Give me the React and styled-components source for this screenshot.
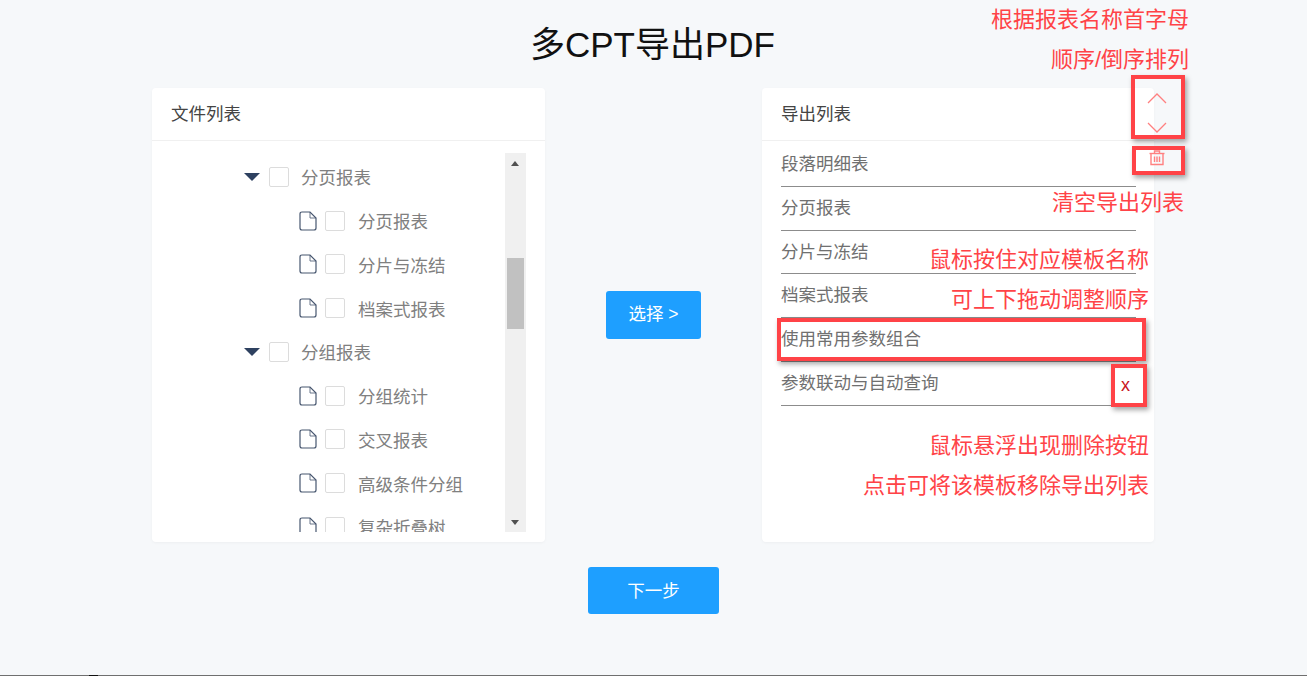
import React from 'react';
import styled, { createGlobalStyle } from 'styled-components';

const GlobalStyle = createGlobalStyle`
  html, body {
    margin: 0;
    padding: 0;
    background: #f6f8fa;
    font-family: "Liberation Sans", "Noto Sans CJK SC", sans-serif;
  }
`;

const tree = [
  { name: '分页报表', children: ['分页报表', '分片与冻结', '档案式报表'] },
  { name: '分组报表', children: ['分组统计', '交叉报表', '高级条件分组', '复杂折叠树'] },
];

const exportList = ['段落明细表', '分页报表', '分片与冻结', '档案式报表', '使用常用参数组合', '参数联动与自动查询'];

const notes = [
  { text: '根据报表名称首字母', right: 118, top: 6 },
  { text: '顺序/倒序排列', right: 118, top: 46 },
  { text: '清空导出列表', right: 123, top: 189 },
  { text: '鼠标按住对应模板名称', right: 158, top: 246 },
  { text: '可上下拖动调整顺序', right: 158, top: 286 },
  { text: '鼠标悬浮出现删除按钮', right: 158, top: 432 },
  { text: '点击可将该模板移除导出列表', right: 158, top: 472 },
];

const boxes = [
  { left: 1131, top: 75, width: 54, height: 64 },
  { left: 1132, top: 146, width: 53, height: 29 },
  { left: 777, top: 318, width: 369, height: 43 },
  { left: 1111, top: 364, width: 36, height: 43 },
];

const FileIcon = () => (
  <svg width="18" height="20" viewBox="0 0 18 20" fill="none">
    <path d="M1 3 Q1 1 3 1 H11 L17 7 V17 Q17 19 15 19 H3 Q1 19 1 17 Z" stroke="#47566f" strokeWidth="1.2" />
    <path d="M11 1 V7 H17" stroke="#47566f" strokeWidth="0.8" />
  </svg>
);

const Chevron = ({ down }) => (
  <svg width="20" height="11" viewBox="0 0 20 11" fill="none">
    <path d={down ? 'M1 1 L10 10 L19 1' : 'M1 10 L10 1 L19 10'} stroke="#ff8080" strokeWidth="1.3" />
  </svg>
);

const TrashIcon = () => (
  <svg width="16" height="16" viewBox="0 0 16 16" fill="none" stroke="#ff8080" strokeWidth="1.4">
    <path d="M0.5 3.5 H15.5" />
    <path d="M5.5 3 V1 H10.5 V3" />
    <path d="M2 4 V14.5 H14 V4" />
    <path d="M5.5 6.5 V12 M8 6.5 V12 M10.5 6.5 V12" />
  </svg>
);

const App = () => (
  <Page>
    <GlobalStyle />
    <Title>多CPT导出PDF</Title>
    <Columns>
      <Card>
        <CardHeader>文件列表</CardHeader>
        <TreeBody>
          <TreeViewport>
            {tree.map(group => (
              <React.Fragment key={group.name}>
                <GroupRow>
                  <Caret />
                  <Checkbox />
                  <GroupLabel>{group.name}</GroupLabel>
                </GroupRow>
                {group.children.map(child => (
                  <LeafRow key={child}>
                    <FileIcon />
                    <Checkbox />
                    <LeafLabel>{child}</LeafLabel>
                  </LeafRow>
                ))}
              </React.Fragment>
            ))}
          </TreeViewport>
          <ScrollTrack>
            <ScrollArrow />
            <ScrollThumb />
            <ScrollArrow $down />
          </ScrollTrack>
        </TreeBody>
      </Card>

      <Middle>
        <SelectButton>选择 &gt;</SelectButton>
      </Middle>

      <Card>
        <CardHeader>导出列表</CardHeader>
        <SortControl>
          <Chevron />
          <Chevron down />
        </SortControl>
        <ClearControl>
          <TrashIcon />
        </ClearControl>
        <ExportBody>
          {exportList.map((name, i) => (
            <ExportRow key={name}>
              {name}
              {i === exportList.length - 1 && <RemoveMark>x</RemoveMark>}
            </ExportRow>
          ))}
        </ExportBody>
      </Card>
    </Columns>
    <NextButton>下一步</NextButton>

    {boxes.map(box => (
      <Callout key={box.left + '-' + box.top} style={box} />
    ))}
    {notes.map(note => (
      <Note key={note.text} style={{ right: note.right, top: note.top }}>
        {note.text}
      </Note>
    ))}
    <WindowEdge />
  </Page>
);

export default App;

const Page = styled.div`
  position: relative;
  width: 1307px;
  height: 676px;
  overflow: hidden;
  display: flex;
  flex-direction: column;
  align-items: center;
  background: #f6f8fa;
`;

const Title = styled.h1`
  margin: 0 2px 0 0;
  height: 88px;
  line-height: 90px;
  font-size: 35px;
  font-weight: 400;
  color: #111;
`;

const Columns = styled.div`
  display: grid;
  grid-template-columns: 393px 217px 392px;
  margin-right: 1px;
`;

const Card = styled.section`
  position: relative;
  height: 454px;
  background: #fff;
  border-radius: 4px;
  box-shadow: 0 1px 3px rgba(0, 0, 0, 0.04);
`;

const CardHeader = styled.header`
  height: 52px;
  line-height: 52px;
  padding-left: 19px;
  font-size: 17.5px;
  color: #444;
  border-bottom: 1px solid #f0f0f0;
`;

const TreeBody = styled.div`
  display: flex;
  height: 379px;
  margin: 12px 19px 0;
`;

const TreeViewport = styled.div`
  flex: 1;
  overflow: hidden;
  padding-left: 73px;
  padding-top: 2px;
`;

const GroupRow = styled.div`
  display: flex;
  align-items: center;
  height: 43.75px;
`;

const LeafRow = styled(GroupRow)`
  padding-left: 55px;
`;

const Caret = styled.span`
  width: 0;
  height: 0;
  margin-right: 9px;
  border-left: 8px solid transparent;
  border-right: 8px solid transparent;
  border-top: 8px solid #2e4160;
`;

const Checkbox = styled.span`
  box-sizing: border-box;
  flex: none;
  width: 20px;
  height: 20px;
  margin-left: 0;
  border: 1px solid #dcdcdc;
  border-radius: 2px;
  background: #fff;
  ${LeafRow} & {
    margin-left: 8px;
  }
`;

const GroupLabel = styled.span`
  margin-left: 12px;
  font-size: 17.5px;
  color: #808080;
`;

const LeafLabel = styled(GroupLabel)`
  margin-left: 13px;
`;

const ScrollTrack = styled.div`
  position: relative;
  flex: none;
  width: 21px;
  background: #f0f0f0;
`;

const ScrollThumb = styled.div`
  position: absolute;
  top: 105px;
  left: 2px;
  width: 17px;
  height: 71px;
  background: #c1c1c1;
`;

const ScrollArrow = styled.span`
  position: absolute;
  left: 6px;
  ${props => (props.$down ? 'bottom: 7px;' : 'top: 8px;')}
  width: 0;
  height: 0;
  border-left: 4.5px solid transparent;
  border-right: 4.5px solid transparent;
  ${props => (props.$down ? 'border-top: 5px solid #505050;' : 'border-bottom: 5px solid #505050;')}
`;

const Middle = styled.div`
  display: flex;
  justify-content: center;
  padding-top: 203px;
`;

const SelectButton = styled.button`
  width: 95px;
  height: 48px;
  padding: 0 0 5px;
  border: none;
  border-radius: 3px;
  background: #1e9fff;
  color: #fff;
  font-family: inherit;
  font-size: 17.5px;
`;

const NextButton = styled(SelectButton)`
  width: 131px;
  height: 47px;
  margin-top: 25px;
  padding-bottom: 3px;
  flex: none;
`;

const SortControl = styled.div`
  position: absolute;
  top: 5px;
  left: 385px;
  display: flex;
  flex-direction: column;
  gap: 18px;
`;

const ClearControl = styled.div`
  position: absolute;
  top: 62px;
  left: 387px;
  line-height: 0;
`;

const ExportBody = styled.div`
  width: 355px;
  margin: 2px 0 0 19px;
`;

const ExportRow = styled.div`
  position: relative;
  box-sizing: border-box;
  height: 43.8px;
  line-height: 42px;
  font-size: 17.5px;
  color: #707070;
  border-bottom: 1px solid #8c8c8c;
`;

const RemoveMark = styled.span`
  position: absolute;
  top: 2px;
  left: 340px;
  font-size: 18px;
  color: #c8141c;
`;

const Callout = styled.div`
  position: absolute;
  box-sizing: border-box;
  border: 4px solid #ff4347;
  box-shadow: 2px 3px 5px rgba(0, 0, 0, 0.35);
`;

const Note = styled.div`
  position: absolute;
  font-size: 22px;
  line-height: 28px;
  white-space: nowrap;
  color: #ff4347;
`;

const WindowEdge = styled.div`
  position: absolute;
  left: 0;
  right: 0;
  bottom: 0;
  height: 1px;
  background: #6f6f6f;

  &::before {
    content: '';
    position: absolute;
    left: 89px;
    width: 9px;
    height: 1px;
    background: #111;
  }
`;
